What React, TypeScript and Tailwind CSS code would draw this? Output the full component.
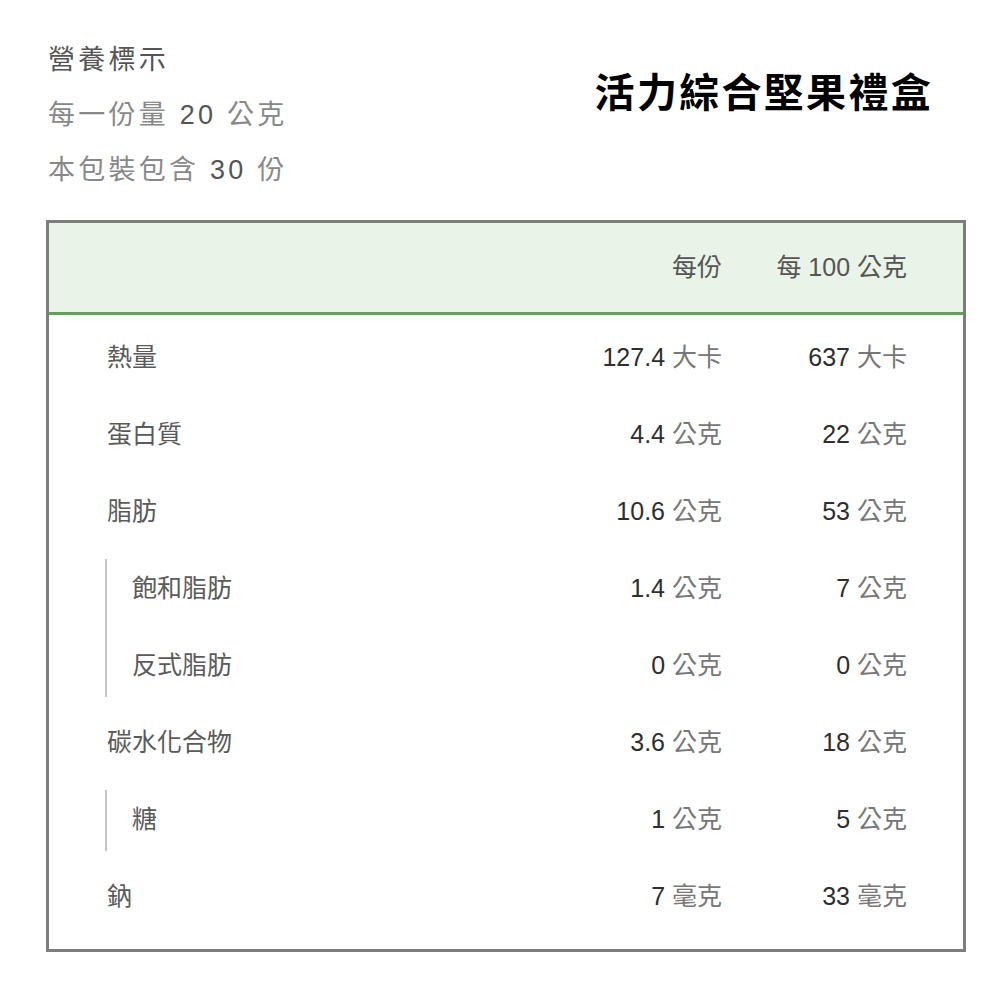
import React from 'react'

type Row = {
  label: string
  perServing: [string, string]
  per100: [string, string]
}

type Group = { rows: Row[]; indent?: boolean }

const groups: Group[] = [
  {
    rows: [
      { label: '熱量', perServing: ['127.4', '大卡'], per100: ['637', '大卡'] },
      { label: '蛋白質', perServing: ['4.4', '公克'], per100: ['22', '公克'] },
      { label: '脂肪', perServing: ['10.6', '公克'], per100: ['53', '公克'] },
    ],
  },
  {
    indent: true,
    rows: [
      { label: '飽和脂肪', perServing: ['1.4', '公克'], per100: ['7', '公克'] },
      { label: '反式脂肪', perServing: ['0', '公克'], per100: ['0', '公克'] },
    ],
  },
  {
    rows: [{ label: '碳水化合物', perServing: ['3.6', '公克'], per100: ['18', '公克'] }],
  },
  {
    indent: true,
    rows: [{ label: '糖', perServing: ['1', '公克'], per100: ['5', '公克'] }],
  },
  {
    rows: [{ label: '鈉', perServing: ['7', '毫克'], per100: ['33', '毫克'] }],
  },
]

function Amount({ value }: { value: [string, string] }) {
  return (
    <span className="whitespace-nowrap">
      <span className="text-[#2e2e2e]">{value[0]}</span>{' '}
      <span className="text-[#777]">{value[1]}</span>
    </span>
  )
}

function NutritionRow({ row, indent }: { row: Row; indent?: boolean }) {
  return (
    <div className="flex h-[77px] items-center pr-[56px]">
      <div className={`flex-1 text-[#5a5a5a] ${indent ? 'pl-[83px]' : 'pl-[58px]'}`}>{row.label}</div>
      <div className="w-[200px] text-right">
        <Amount value={row.perServing} />
      </div>
      <div className="w-[185px] text-right">
        <Amount value={row.per100} />
      </div>
    </div>
  )
}

export default function App() {
  const font = { fontFamily: '"Liberation Sans", "Noto Sans CJK TC", sans-serif' }

  return (
    <div className="min-h-screen bg-white pl-[46px] pt-[33px]" style={font}>
      {/* top info */}
      <div className="flex w-[920px] justify-between">
        <div className="pl-[2px] text-[27px] leading-[55px] tracking-[0.12em] text-[#888]">
          <div className="text-[#555]">營養標示</div>
          <div>
            每一份量 <span className="text-[#555]">20</span> 公克
          </div>
          <div>
            本包裝包含 <span className="text-[#555]">30</span> 份
          </div>
        </div>
        <h1 className="pr-[33px] pt-[40px] text-[40px] font-bold leading-[40px] tracking-[2.3px] text-black">
          活力綜合堅果禮盒
        </h1>
      </div>

      {/* table */}
      <div className="mt-[22px] w-[920px] border-[3px] border-[#7d7d7d] text-[25px]">
        <div className="flex h-[92px] items-center border-b-[3px] border-[#63a05a] bg-[#eaf3e8] pr-[56px] text-[#555]">
          <div className="flex-1" />
          <div className="w-[200px] text-right">每份</div>
          <div className="w-[185px] text-right">每 100 公克</div>
        </div>
        <div className="pb-[14px] pt-[4px]">
          {groups.map((g, gi) => (
            <div key={gi} className="relative">
              {g.indent && (
                <div className="absolute bottom-[7px] left-[56px] top-[9px] w-[2px] bg-[#c4c4c4]" />
              )}
              {g.rows.map((r) => (
                <NutritionRow key={r.label} row={r} indent={g.indent} />
              ))}
            </div>
          ))}
        </div>
      </div>
    </div>
  )
}
